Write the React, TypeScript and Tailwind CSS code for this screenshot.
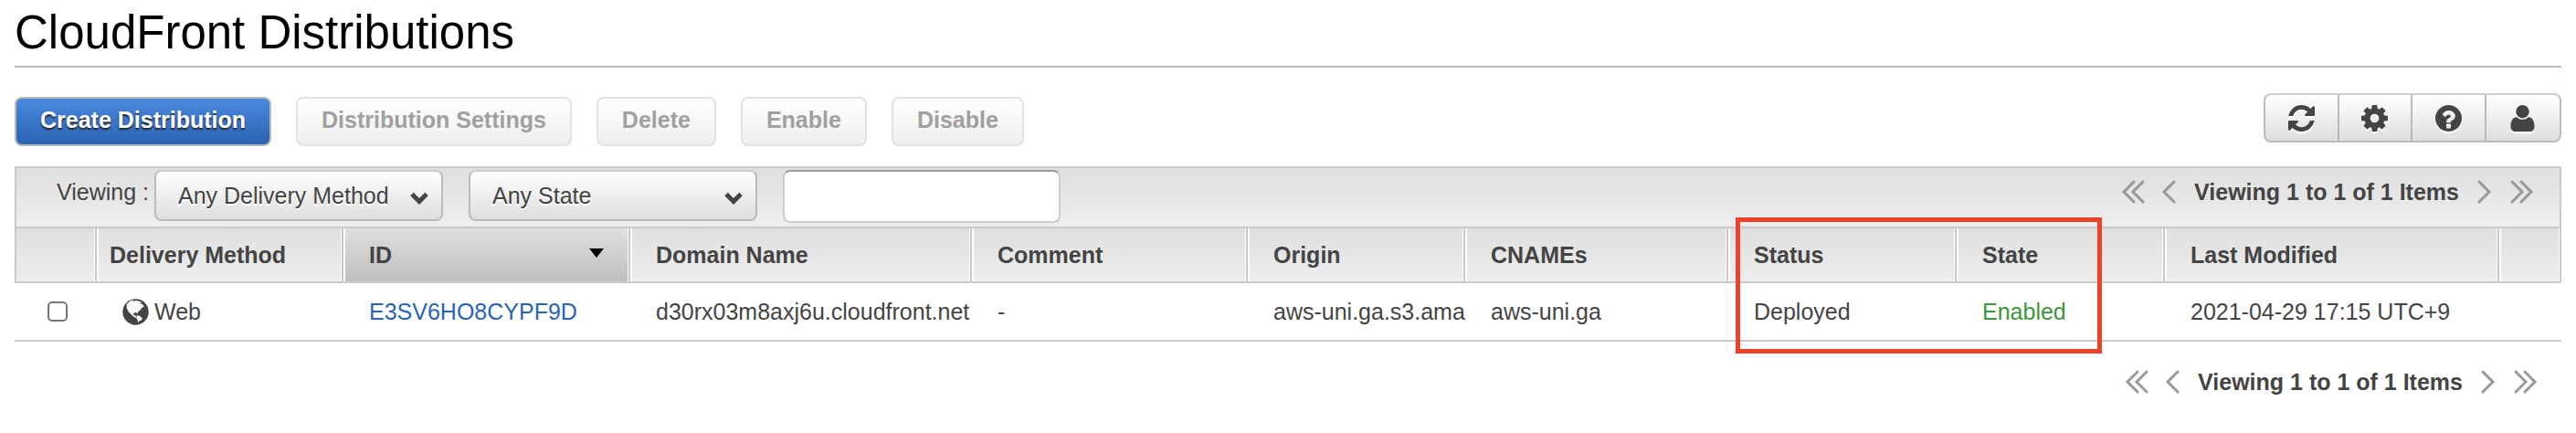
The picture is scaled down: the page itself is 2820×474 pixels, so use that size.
import React from 'react';

interface IconProps {
  className?: string;
}

const RefreshIcon = ({ className }: IconProps) => (
  <svg viewBox="0 0 1536 1536" fill="currentColor" className={className} aria-hidden="true">
    <path d="M1511 928q0 5-1 7-64 268-268 434.5t-478 166.5q-146 0-282.5-55t-243.5-157l-129 129q-19 19-45 19t-45-19-19-45v-448q0-26 19-45t45-19h448q26 0 45 19t19 45-19 45l-137 137q71 66 161 102t187 36q134 0 250-65t186-179q11-17 53-117 8-23 30-23h192q13 0 22.5 9.5t9.5 22.5zm25-800v448q0 26-19 45t-45 19h-448q-26 0-45-19t-19-45 19-45l138-138q-148-137-349-137-134 0-250 65t-186 179q-11 17-53 117-8 23-30 23h-199q-13 0-22.500-9.500t-9.500-22.500v-7q65-268 270-434.500t480-166.500q146 0 284 55.500t245 156.500l130-129q19-19 45-19t45 19 19 45z" />
  </svg>
);

const GearIcon = ({ className }: IconProps) => (
  <svg viewBox="0 0 1536 1536" fill="currentColor" className={className} aria-hidden="true">
    <path d="M1024 768q0-106-75-181t-181-75-181 75-75 181 75 181 181 75 181-75 75-181zm512-109v222q0 12-8 23t-20 13l-185 28q-19 54-39 91 35 50 107 138 10 12 10 25t-9 23q-27 37-99 108t-94 71q-12 0-26-9l-138-108q-44 23-91 38-16 136-29 186-7 28-36 28h-222q-14 0-24.5-8.5t-11.5-21.5l-28-184q-49-16-90-37l-141 107q-10 9-25 9-14 0-25-11-126-114-165-168-7-10-7-23 0-12 8-23 15-21 51-66.5t54-70.5q-27-50-41-99l-183-27q-13-2-21-12.5t-8-23.5v-222q0-12 8-23t19-13l186-28q14-46 39-92-40-57-107-138-10-12-10-24 0-10 9-23 26-36 98.5-107.5t94.5-71.5q13 0 26 10l138 107q44-23 91-38 16-136 29-186 7-28 36-28h222q14 0 24.5 8.5t11.5 21.5l28 184q49 16 90 37l142-107q9-9 24-9 13 0 25 10 129 119 165 170 7 8 7 22 0 12-8 23-15 21-51 66.5t-54 70.5q26 50 41 98l183 28q13 2 21 12.5t8 23.5z" />
  </svg>
);

const HelpIcon = ({ className }: IconProps) => (
  <svg viewBox="0 0 1536 1536" fill="currentColor" className={className} aria-hidden="true">
    <path d="M896 1312v-192q0-14-9-23t-23-9h-192q-14 0-23 9t-9 23v192q0 14 9 23t23 9h192q14 0 23-9t9-23zm256-672q0-88-55.5-163t-138.5-116-170-41q-243 0-371 213-15 24 8 42l132 100q7 6 19 6 16 0 25-12 53-68 86-92 34-24 86-24 48 0 85.5 26t37.5 59q0 38-20 61t-68 45q-63 28-115.5 86.5t-52.5 125.5v36q0 14 9 23t23 9h192q14 0 23-9t9-23q0-19 21.5-49.5t54.5-49.5q32-18 49-28.5t46-35 44.5-48 28-60.5 12.5-81zm384 128q0 209-103 385.5t-279.5 279.5-385.5 103-385.5-103-279.5-279.5-103-385.5 103-385.5 279.5-279.5 385.5-103 385.5 103 279.5 279.5 103 385.5z" />
  </svg>
);

const UserIcon = ({ className }: IconProps) => (
  <svg viewBox="0 0 29 29" fill="currentColor" className={className} aria-hidden="true">
    <circle cx="14.5" cy="7.2" r="7.2" />
    <path d="M8 13.2c1.8 1.7 4 2.6 6.5 2.6s4.700-.9 6.500-2.600c4.200.2 6.500 4.300 6.500 10.300 0 3.600-2.100 5.500-5 5.500h-16c-2.900 0-5-1.900-5-5.500 0-6 2.300-10.100 6.500-10.300z" />
  </svg>
);

const GlobeIcon = ({ className }: IconProps) => (
  <svg viewBox="0 0 29 29" className={className} aria-hidden="true">
    <circle cx="14.5" cy="14.5" r="14.2" fill="currentColor" />
    <path
      fill="#fff"
      d="M4.700 6 8 2.800l3-1.300 1.500.2-.5 1.500 3-1.500 6 2-2 2 2.500-.2 2.500 3.500-2.500.5-1.500 2.500-3 2.500-.5 2-1.500-1.500-2.500.5-.5 2.300 1.500.5 1-.8-.2 1.800 1.500 1.200-1.800.2-3-2.200-4-4L4.700 10.500zM16 18.300l3 .4 3 3-1.500 2-2 .5-1.500 2.200-.3-3-1.500-2.500z"
    />
  </svg>
);

const Chevron = ({ className }: IconProps) => (
  <svg viewBox="0 0 20 14" fill="none" stroke="currentColor" strokeWidth="5" className={className} aria-hidden="true">
    <path d="M2 2.500 10 10.500l8-8" />
  </svg>
);

const arrowPaths = {
  first: 'M14 2 3 13l11 11M24 2 13 13l11 11',
  prev: 'M14 2 3 13l11 11',
  next: 'M2 2l11 11L2 24',
  last: 'M2 2l11 11L2 24M12 2l11 11-11 11',
};

interface PageArrowProps {
  kind: keyof typeof arrowPaths;
  label: string;
}

const PageArrow: React.FC<PageArrowProps> = ({ kind, label }) => {
  const width = kind === 'first' || kind === 'last' ? 26 : 16;
  return (
    <button type="button" aria-label={label} className="text-[#999]">
      <svg
        width={width}
        height="26"
        viewBox={`0 0 ${width} 26`}
        fill="none"
        stroke="currentColor"
        strokeWidth="3"
        strokeLinecap="round"
      >
        <path d={arrowPaths[kind]} />
      </svg>
    </button>
  );
};

const Pagination = () => (
  <nav className="flex items-center" aria-label="Pagination">
    <div className="flex gap-[18px]">
      <PageArrow kind="first" label="First page" />
      <PageArrow kind="prev" label="Previous page" />
    </div>
    <span className="mx-5 font-bold">Viewing 1 to 1 of 1 Items</span>
    <div className="flex gap-5">
      <PageArrow kind="next" label="Next page" />
      <PageArrow kind="last" label="Last page" />
    </div>
  </nav>
);

interface FilterSelectProps {
  label: string;
  value: string;
}

const FilterSelect: React.FC<FilterSelectProps> = ({ label, value }) => (
  <div className="relative">
    <select
      aria-label={label}
      className="h-14 w-[316px] appearance-none rounded-lg border-2 border-[#bbb] border-t-[#ccc] bg-linear-to-b from-white to-[#dedede] pl-6 text-[#444] text-shadow-[0_2px_0_#fff]"
    >
      <option>{value}</option>
    </select>
    <Chevron className="pointer-events-none absolute top-6 right-4 h-[14px] w-5 text-[#444]" />
  </div>
);

const actions = ['Distribution Settings', 'Delete', 'Enable', 'Disable'];

const tools = [
  { label: 'Refresh', Icon: RefreshIcon },
  { label: 'Settings', Icon: GearIcon },
  { label: 'Help', Icon: HelpIcon },
  { label: 'Account', Icon: UserIcon },
];

const columns = [
  { name: '', width: 'w-[90px]' },
  { name: 'Delivery Method', width: 'w-[270px]' },
  { name: 'ID', width: 'w-[314px]' },
  { name: 'Domain Name', width: 'w-[374px]' },
  { name: 'Comment', width: 'w-[302px]' },
  { name: 'Origin', width: 'w-[238px]' },
  { name: 'CNAMEs', width: 'w-[288px]' },
  { name: 'Status', width: 'w-[250px]' },
  { name: 'State', width: 'w-[228px]' },
  { name: 'Last Modified', width: 'w-[366px]' },
  { name: '', width: '' },
];

const App: React.FC = () => {
  return (
    <main className="bg-white px-4 font-['Liberation_Sans',Arial,sans-serif] text-[25px] leading-8 text-[#444]">
      <h1 className="border-b-2 border-[#b7b7b7] pt-[6px] pb-[6px] text-[51px] leading-[60px] text-black">
        CloudFront Distributions
      </h1>

      <div className="flex items-start justify-between pt-7">
        <div className="flex gap-[27px] pt-1">
          <button
            type="button"
            className="h-[54px] rounded-lg border-2 border-[#b9b9b9] bg-linear-to-b from-[#4a8ade] to-[#2b62b3] px-[26px] pb-1 font-bold text-white text-shadow-[0_2px_2px_#222]"
          >
            Create Distribution
          </button>
          {actions.map((action) => (
            <button
              key={action}
              type="button"
              disabled
              className="h-[54px] rounded-lg border-2 border-[#e2e2e2] bg-linear-to-b from-white to-[#eee] px-[26px] pb-1 font-bold text-[#a0a0a0]"
            >
              {action}
            </button>
          ))}
        </div>

        <div className="grid h-[54px] w-[326px] grid-cols-4 divide-x-2 divide-[#bbb] overflow-hidden rounded-lg border-2 border-[#bbb] border-t-[#ccc] bg-linear-to-b from-white to-[#dedede]">
          {tools.map(({ label, Icon }) => (
            <button key={label} type="button" aria-label={label} className="flex items-center justify-center">
              <Icon className="size-[29px] drop-shadow-[0_2px_0_#fff]" />
            </button>
          ))}
        </div>
      </div>

      <section className="mt-[22px]">
        <div className="flex h-[66px] items-start justify-between border-2 border-b-0 border-[#c9c9c9] bg-linear-to-b from-[#dfdfdf] to-[#eee] pt-[2px] pr-7 pl-11">
          <div className="flex items-start">
            <span className="pt-2 pr-[6px]">Viewing :</span>
            <FilterSelect label="Delivery method" value="Any Delivery Method" />
            <div className="ml-7">
              <FilterSelect label="State" value="Any State" />
            </div>
            <input
              type="text"
              aria-label="Search distributions"
              className="ml-7 h-[58px] w-[304px] rounded-lg border-2 border-[#ccc] border-t-[#999] bg-white px-3"
            />
          </div>
          <div className="pt-2">
            <Pagination />
          </div>
        </div>

        <table className="w-full table-fixed border-separate border-spacing-0 text-left">
          <thead>
            <tr>
              {columns.map(({ name, width }, i) => (
                <th
                  key={i}
                  scope="col"
                  className={`relative h-[62px] border-y-2 border-r-2 border-[#c9c9c9] p-0 font-bold first:border-l-2 ${width}`}
                >
                  <div
                    className={`flex h-[58px] items-center justify-between border-r border-white bg-linear-to-b pr-[26px] ${
                      i > 0 ? 'border-l-2' : ''
                    } ${i === 1 ? 'pl-3' : 'pl-[26px]'} ${
                      name === 'ID' ? 'from-[#dfdfdf] to-[#bfbfbf]' : 'from-[#dfdfdf] to-[#eee]'
                    }`}
                  >
                    {name}
                    {name === 'ID' && (
                      <svg width="16" height="14" viewBox="0 0 16 14" aria-hidden="true">
                        <path d="M0 0h16L8 10z" fill="#000" />
                      </svg>
                    )}
                  </div>
                  {name === 'Status' && (
                    <div className="pointer-events-none absolute -top-3 left-2 z-10 h-[149px] w-[401px] border-5 border-[#ee4128]" />
                  )}
                </th>
              ))}
            </tr>
          </thead>
          <tbody>
            <tr className="[&>td]:h-16 [&>td]:overflow-hidden [&>td]:border-b-2 [&>td]:border-[#c9c9c9] [&>td]:whitespace-nowrap [&>td]:pl-7">
              <td>
                <input
                  type="checkbox"
                  aria-label="Select distribution E3SV6HO8CYPF9D"
                  className="ml-2 block size-[22px] appearance-none rounded-[5px] border-2 border-[#767676] bg-white"
                />
              </td>
              <td>
                <span className="flex items-center gap-[6px]">
                  <GlobeIcon className="size-[29px]" />
                  Web
                </span>
              </td>
              <td>
                <a href="#E3SV6HO8CYPF9D" className="text-[#2864b8]">
                  E3SV6HO8CYPF9D
                </a>
              </td>
              <td>d30rx03m8axj6u.cloudfront.net</td>
              <td>-</td>
              <td>aws-uni.ga.s3.ama</td>
              <td>aws-uni.ga</td>
              <td>Deployed</td>
              <td className="text-[#3c963c]">Enabled</td>
              <td>2021-04-29 17:15 UTC+9</td>
              <td></td>
            </tr>
          </tbody>
        </table>

        <div className="flex justify-end pt-7 pr-[26px] pb-10">
          <Pagination />
        </div>
      </section>
    </main>
  );
};

export default App;
